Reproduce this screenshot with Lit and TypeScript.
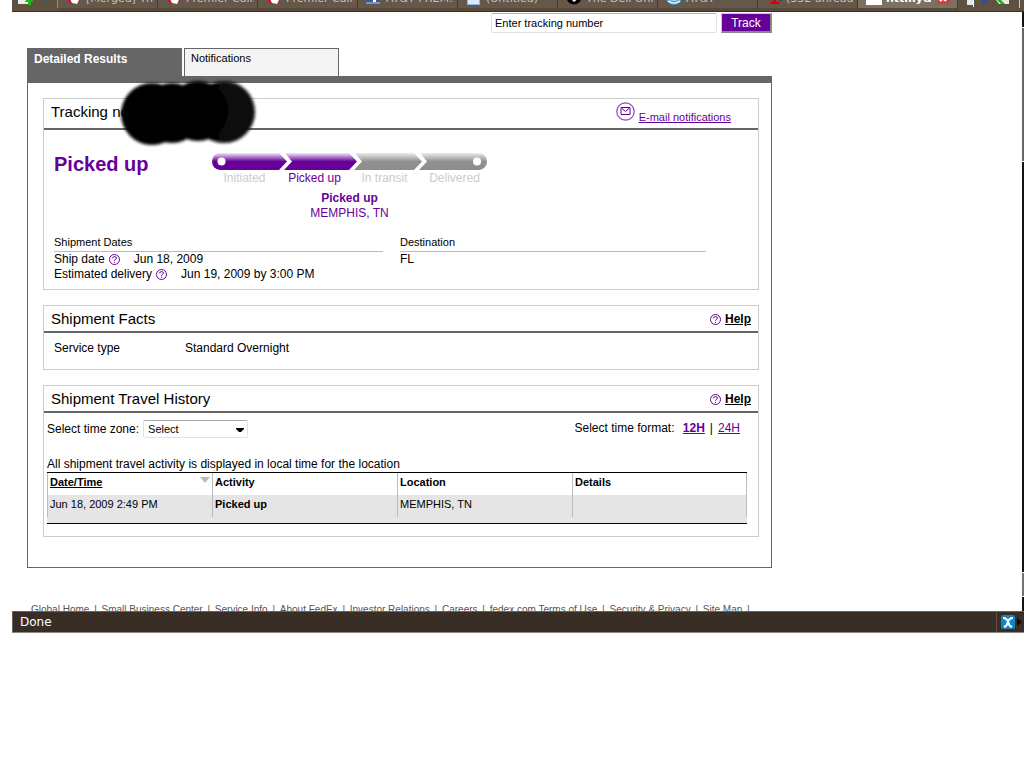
import { LitElement, html, css, svg } from "lit";
import { customElement } from "lit/decorators.js";

const dellRing = svg`<circle cx="8" cy="6" r="7" fill="#d01020"/><path d="M5 0 L7 5 L13 9 L11 13 L6 12 L3 6 Z" fill="#fff"/>`;

const tabs = [
  { label: "[Merged] Thi...", icon: dellRing },
  { label: "Premier Call...", icon: dellRing },
  { label: "Premier Call...", icon: dellRing },
  { label: "AT&T PREM...", icon: svg`<rect width="14" height="13" fill="#3b5998"/><rect y="11" width="14" height="2" fill="#7d93c4"/><path d="M8 3h2v3h3v2h-3v3H7V8H5V6h2z" fill="#fff"/>` },
  { label: "(Untitled)", icon: svg`<rect x="1" width="13" height="14" fill="#8fb4ea"/><rect x="2" y="1" width="11" height="12" fill="#dbe8fb"/>` },
  { label: "The Dell Onl...", icon: svg`<circle cx="8" cy="6" r="7.5" fill="#000"/><path d="M8 2l5 5-5 4-4-4z" fill="#fff"/>` },
  { label: "AT&T", icon: svg`<circle cx="8" cy="6" r="8" fill="#3b9bd0"/><path d="M1 7q7 4 14 0M2 10q6 4 12 0M1 4q7 4 14 0" stroke="#e6f4fb" stroke-width="1.6" fill="none"/>` },
  { label: "(332 unread...", icon: svg`<path d="M7 0h3v11h3v2H4v-2h3z" fill="#d80000"/><path d="M14 3h2v6l-2 1z" fill="#222"/>` },
];

const steps = ["Initiated", "Picked up", "In transit", "Delivered"];

const footerLinks = [
  "Global Home", "Small Business Center", "Service Info", "About FedEx", "Investor Relations",
  "Careers", "fedex.com Terms of Use", "Security & Privacy", "Site Map",
];

const helpIcon = html`<svg class="help-icon" viewBox="0 0 11 11" aria-hidden="true">
  <circle cx="5.5" cy="5.5" r="5" fill="none" stroke="#660099"/>
  <path d="M3.6 4.3Q3.7 2.6 5.5 2.6Q7.4 2.6 7.4 4Q7.4 4.8 6.3 5.4Q5.5 5.9 5.5 6.8" fill="none" stroke="#660099"/>
  <rect x="5" y="7.8" width="1" height="1" fill="#660099"/>
</svg>`;

@customElement("browser-tabs")
class BrowserTabs extends LitElement {
  static styles = css`
    :host { display: flex; height: 12px; box-sizing: border-box; overflow: hidden; align-items: flex-end;
      background: #5f5140; border-bottom: 1px solid #3a2f24;
      font: 11px/16px "DejaVu Sans", sans-serif; color: #c9c2b8; }
    .tools { flex: 0 0 46px; height: 8px; box-sizing: border-box; border-right: 1px solid #968a7b; margin-bottom: 3px; }
    .tools svg { width: 44px; height: 8px; display: block; }
    .tab { flex: 0 1 100px; box-sizing: border-box; min-width: 0; height: 20px; display: flex; gap: 4px;
      align-items: flex-start; padding: 0 3px 0 8px; border: 0; border-right: 1px solid #463a2d;
      background: #65574a; color: inherit; font: inherit; overflow: hidden; border-bottom: 3px solid #594b3b; }
    .tab svg { flex: 0 0 16px; height: 16px; }
    .label { white-space: nowrap; overflow: hidden; }
    .active { background: #7c7062; color: #fff; font-weight: bold; padding-right: 6px; }
    .active .label { flex: 1; text-align: left; }
    .end { flex: 1; height: 11px; }
    .end svg { width: 66px; height: 11px; display: block; }
  `;
  render() {
    return html`
      <div class="tools"><svg viewBox="0 0 44 8">
        <rect x="6" width="12" height="4" fill="#e9eee9"/><path d="M14 0h7v2h-2v3h-3V2h-3z" fill="#21b321"/><path d="M32 0h4v2z" fill="#3c5b8c"/>
      </svg></div>
      ${tabs.map((t) => html`<button class="tab"><svg viewBox="0 0 16 16">${t.icon}</svg><span class="label">${t.label}</span></button>`)}
      <button class="tab active"><svg viewBox="0 0 16 16"><rect width="16" height="14" fill="#fff"/></svg>
        <span class="label">httmy&amp;</span>
        <svg viewBox="0 0 16 16"><rect x="2" width="13" height="13" rx="2" fill="#d43c3c"/><path d="M5 5l6 5M11 5l-6 5" stroke="#fff" stroke-width="2"/></svg>
      </button>
      <div class="end"><svg viewBox="0 0 66 11">
        <rect x="9" width="7" height="5" fill="#dce7f7"/><rect x="15" width="1" height="7" fill="#fff"/><path d="M25 0h5l-4 4h-2z" fill="#1c50b8"/>
        <path d="M38 0h13v4H41z" fill="#e4ebe2"/><path d="M39 0h4l4 4h-4z" fill="#27ad20"/><rect x="61" width="1" height="8" fill="#cfc7bd"/>
      </svg></div>`;
  }
}

@customElement("progress-track")
class ProgressTrack extends LitElement {
  static styles = css`
    :host { display: block; width: 275px; text-align: center; font-size: 12px; line-height: 15px; color: #660099; }
    .bar { display: block; width: 275px; height: 17px; }
    .steps { display: grid; grid-template-columns: repeat(4, 70px); justify-content: center; margin: 1px 0 0; padding: 0; list-style: none; color: #ccc; }
    .current { color: #660099; }
    .status { margin-top: 5px; }
    .status strong { display: block; }
  `;
  render() {
    return html`
      <svg class="bar" viewBox="0 0 275 17" aria-hidden="true">
        <defs>
          <linearGradient id="on" x2="0" y2="1"><stop offset="0" stop-color="#f2e8f7"/><stop offset=".5" stop-color="#660099"/><stop offset="1" stop-color="#660099"/></linearGradient>
          <linearGradient id="off" x2="0" y2="1"><stop offset="0" stop-color="#ececec"/><stop offset=".5" stop-color="#919191"/><stop offset="1" stop-color="#8d8d8d"/></linearGradient>
        </defs>
        <path d="M8 0H67L75 8.5L67 17H8A8 8.5 0 0 1 8 0Z" fill="url(#on)"/>
        <path d="M73 0H137L145 8.5L137 17H72L80 8.5Z" fill="url(#on)"/>
        <path d="M143 0H202L210 8.5L202 17H142L150 8.5Z" fill="url(#off)"/>
        <path d="M208 0H267A8 8.5 0 0 1 267 17H207L215 8.5Z" fill="url(#off)"/>
        <circle cx="9.5" cy="8.5" r="4" fill="#fff"/><circle cx="265" cy="8.5" r="4" fill="#fff"/>
      </svg>
      <ol class="steps">${steps.map((s, i) => html`<li class=${i === 1 ? "current" : ""}>${s}</li>`)}</ol>
      <div class="status"><strong>Picked up</strong>MEMPHIS, TN</div>`;
  }
}

@customElement("app-root")
class AppRoot extends LitElement {
  static styles = css`
    :host { display: block; background: #fff; color: #000; font: 12px/15px "Liberation Sans", Arial, sans-serif; }
    * { box-sizing: border-box; }
    .window { margin-left: 12px; }
    .view { display: flex; }
    .page { flex: 1; min-width: 0; padding: 1px 16px 0 15px; }
    .scroll { flex: 0 0 2px; display: flex; flex-direction: column; padding-top: 1px; background: #17120d; }
    .scroll i { display: block; }
    .thumb { height: 135px; background: #6c665f; margin-top: 14px; border: solid #fff; border-width: 1px 0; }
    .arrow { height: 25px; background: #77716a; margin-top: auto; margin-bottom: 14px; border: solid #fff; border-width: 1px 0; }
    .column { max-width: 745px; }
    .search { display: flex; justify-content: flex-end; gap: 4px; height: 20px; }
    .search input { width: 226px; height: 20px; padding: 0 3px; border: 1px solid #dfe3e8; border-top-color: #b4b4b4;
      border-radius: 2px; font: 11px "Liberation Sans", sans-serif; color: #000; background: #fff; }
    .search button { width: 51px; height: 20px; padding: 0; border: 1px solid #ccc; border-width: 1px 2px 2px 1px;
      border-right-color: #888; border-bottom-color: #888; background: #660099; color: #fff; font: 12px "Liberation Sans", sans-serif; }
    .tabs { display: flex; gap: 2px; margin-top: 15px; border-bottom: 7px solid #666; }
    .tabs button { width: 155px; height: 28px; padding: 2px 6px; border: 1px solid #666; border-bottom: 0; background: #f4f4f4;
      display: flex; align-items: flex-start; font: 11px/15px "Liberation Sans", sans-serif; color: #000; }
    .tabs .selected { background: #666; color: #fff; font-weight: bold; font-size: 12px; line-height: 16px; }
    .results { border: 1px solid #666; border-top: 0; padding: 15px 12px 30px 15px; display: grid; gap: 15px; }
    .panel { border: 1px solid #ccc; min-width: 0; }
    .panel header { display: flex; justify-content: space-between; align-items: center; height: 27px; padding: 0 7px;
      border-bottom: 2px solid #666; }
    .panel header.tall { height: 31px; padding-right: 27px; align-items: flex-start; padding-top: 3px; }
    h2 { margin: 0; font-size: 15px; line-height: 20px; font-weight: normal; }
    a { color: #660099; }
    .redacted { position: relative; }
    .blot { position: absolute; left: 68px; top: -25px; width: 140px; height: 70px; }
    .mail { display: flex; align-items: flex-start; gap: 4px; font-size: 11px; line-height: 14px; }
    .mail svg { width: 19px; height: 19px; }
    .mail span { padding-top: 8px; }
    .help { display: flex; align-items: center; gap: 4px; padding-top: 2px; color: #000; font-weight: bold; }
    .help-icon { width: 11px; height: 11px; flex: none; }
    .status-row { display: flex; padding: 23px 10px 0; }
    .status-row h1 { width: 158px; margin: 0; font-size: 20px; line-height: 22px; color: #660099; }
    .facts { display: grid; grid-template-columns: 329px 306px; gap: 17px; padding: 14px 10px 7px; }
    h3 { margin: 0; padding-bottom: 2px; border-bottom: 1px solid #bbb; font-size: 11px; line-height: 14px; font-weight: normal; }
    .pair { display: flex; align-items: center; gap: 4px; }
    .pair .value { margin-left: 10px; }
    .service { display: grid; grid-template-columns: 131px 1fr; padding: 8px 10px 13px; }
    .history { padding: 7px 11px 12px 3px; }
    .controls { display: flex; justify-content: space-between; align-items: flex-start; height: 37px; padding-right: 7px; }
    .zone { display: flex; align-items: center; gap: 4px; }
    .drop { position: relative; display: flex; }
    select { appearance: none; width: 105px; height: 18px; padding: 0 4px; border: 1px solid #dfe3e8; border-top-color: #aaa;
      border-radius: 2px; background: #fff; color: #000; font: 11px "Liberation Sans", sans-serif; }
    .drop svg { position: absolute; right: 4px; top: 8px; width: 8px; height: 5px; pointer-events: none; }
    .format { line-height: 17px; }
    .format b, .format span { margin: 0 5px; }
    .format span { margin-right: 0; }
    .note { margin: 0; }
    .table-wrap { background: #e5e5e5; border: solid #000; border-width: 1px 0; padding-bottom: 6px; }
    table { width: 100%; table-layout: fixed; border-collapse: separate; border-spacing: 0; font-size: 11px; line-height: 14px; }
    th, td { height: 22px; padding: 2px; text-align: left; vertical-align: top; border-left: 1px solid #bbb; }
    th { background: #fff; }
    th:last-child, td:last-child { border-right: 1px solid #bbb; }
    th a { color: #000; }
    .sort { display: flex; justify-content: space-between; }
    .sort svg { width: 10px; height: 6px; margin-top: 2px; }
    .c1 { width: 165px; } .c2 { width: 185px; } .c3 { width: 175px; }
    footer { margin-top: 36px; padding-left: 2px; height: 7px; overflow: hidden; white-space: nowrap; font-size: 10px; line-height: 12px; color: #555; }
    footer a { color: inherit; text-decoration: none; margin: 0 2px; }
    .statusbar { display: flex; align-items: center; justify-content: space-between; height: 22px; padding-left: 7px;
      background: #392e26; color: #fff; font: 12px/20px "DejaVu Sans", sans-serif; border: 1px solid #6b6259; border-right: 0; border-bottom-color: #8d8780; }
    .tray { display: flex; align-items: center; width: 28px; height: 20px; padding-left: 4px; border-left: 1px solid #5c5045; }
    .tray svg { width: 22px; height: 14px; }
  `;

  help() {
    return html`<a class="help" href="#help">${helpIcon}<span>Help</span></a>`;
  }

  render() {
    return html`
      <div class="window">
        <browser-tabs></browser-tabs>
        <div class="view">
          <main class="page">
            <div class="column">
              <form class="search">
                <input type="text" aria-label="Enter tracking number" value="Enter tracking number">
                <button type="button">Track</button>
              </form>
              <nav class="tabs"><button class="selected">Detailed Results</button><button>Notifications</button></nav>
              <div class="results">
                <section class="panel">
                  <header class="tall">
                    <div class="redacted">
                      <h2>Tracking no.</h2>
                      <svg class="blot" viewBox="0 0 140 70" aria-hidden="true">
                        <defs><filter id="soft" x="-10%" y="-10%" width="120%" height="120%"><feGaussianBlur stdDeviation="1.4"/></filter></defs>
                        <g filter="url(#soft)"><circle cx="105" cy="35" r="31" fill="#0a0a0a"/><rect x="50" y="8" width="50" height="54" fill="#050505"/>
                        <circle cx="79" cy="34" r="30" fill="#050505"/><circle cx="53" cy="36" r="30"/><circle cx="33" cy="37" r="31"/></g>
                      </svg>
                    </div>
                    <a class="mail" href="#email">
                      <svg viewBox="0 0 19 19" aria-hidden="true"><circle cx="9.5" cy="9.5" r="8.7" fill="none" stroke="#8a45b0" stroke-width="1.2"/><path d="M5 5.5h9v7H5zM5.5 6L9.5 9.5L13.5 6" fill="none" stroke="#660099"/></svg>
                      <span>E-mail notifications</span>
                    </a>
                  </header>
                  <div class="status-row"><h1>Picked up</h1><progress-track></progress-track></div>
                  <div class="facts">
                    <div><h3>Shipment Dates</h3>
                      <div class="pair">Ship date ${helpIcon}<span class="value">Jun 18, 2009</span></div>
                      <div class="pair">Estimated delivery ${helpIcon}<span class="value">Jun 19, 2009 by 3:00 PM</span></div>
                    </div>
                    <div><h3>Destination</h3><div>FL</div></div>
                  </div>
                </section>
                <section class="panel">
                  <header><h2>Shipment Facts</h2>${this.help()}</header>
                  <div class="service"><span>Service type</span><span>Standard Overnight</span></div>
                </section>
                <section class="panel">
                  <header><h2>Shipment Travel History</h2>${this.help()}</header>
                  <div class="history">
                    <div class="controls">
                      <div class="zone"><label for="tz">Select time zone:</label>
                        <span class="drop"><select id="tz"><option>Select</option></select>
                        <svg viewBox="0 0 8 5" aria-hidden="true"><path d="M0 0h8v1L5 4H3L0 1z"/></svg></span></div>
                      <div class="format">Select time format: <b><a href="#12">12H</a></b>|<span><a href="#24">24H</a></span></div>
                    </div>
                    <p class="note">All shipment travel activity is displayed in local time for the location</p>
                    <div class="table-wrap"><table>
                      <colgroup><col class="c1"><col class="c2"><col class="c3"><col></colgroup>
                      <thead><tr><th><div class="sort"><a href="#sort">Date/Time</a><svg viewBox="0 0 10 6"><path d="M0 0h10L5 6z" fill="#bbb"/></svg></div></th><th>Activity</th><th>Location</th><th>Details</th></tr></thead>
                      <tbody><tr><td>Jun 18, 2009 2:49 PM</td><td><b>Picked up</b></td><td>MEMPHIS, TN</td><td></td></tr></tbody>
                    </table></div>
                  </div>
                </section>
              </div>
              <footer>${footerLinks.map((l) => html`<a href="#">${l}</a> | `)}</footer>
            </div>
          </main>
          <div class="scroll"><i class="thumb"></i><i class="arrow"></i></div>
        </div>
        <div class="statusbar"><span>Done</span>
          <div class="tray"><svg viewBox="0 0 22 14"><rect width="14" height="14" rx="2" fill="#1286c4"/><path d="M2 3Q6 3 7 7Q6 11 3 12M12 3Q8 3 7 7Q8 11 11 12" fill="none" stroke="#fff" stroke-width="2"/><path d="M16 3l5 4-5 4z" fill="#0c0a08"/></svg></div>
        </div>
      </div>`;
  }
}
